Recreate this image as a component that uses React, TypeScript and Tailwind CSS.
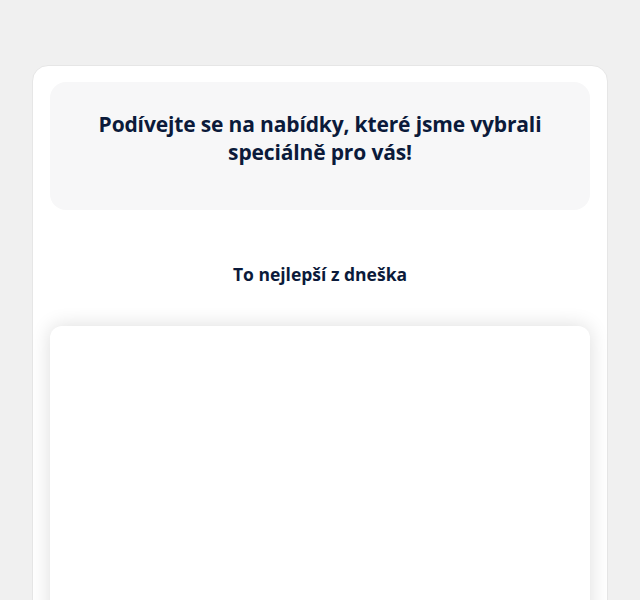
export default function App() {
  return (
    <div className="min-h-[600px] bg-[#f0f0f0] px-8 pt-[65px]" style={{ fontFamily: '"Open Sans", "Noto Sans", sans-serif' }}>
      <div className="rounded-t-2xl border border-[#e6e6e6] bg-white px-[17px] pt-4 pb-10">
        <div className="rounded-2xl bg-[#f7f7f8] px-10 pt-[28px] pb-[44px] text-center">
          <h1 className="text-[21px] font-bold leading-[28px] tracking-[-0.15px] text-[#0b1a3a]">
            Podívejte se na nabídky, které jsme vybrali
            <br />
            speciálně pro vás!
          </h1>
        </div>
        <h2 className="mt-[52px] text-center text-[17.5px] font-bold leading-6 text-[#0b1a3a]">
          To nejlepší z dneška
        </h2>
        <div className="mt-[40px] h-[400px] rounded-xl bg-white shadow-[0_0_20px_rgba(0,0,0,0.14)]" />
      </div>
    </div>
  )
}
